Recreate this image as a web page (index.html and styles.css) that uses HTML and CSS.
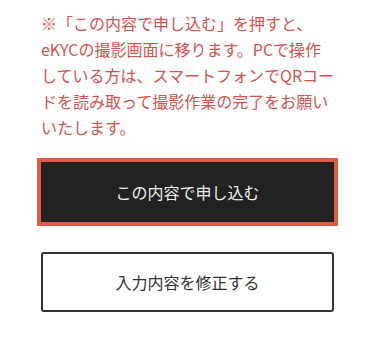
FILE: index.html
```html
<!DOCTYPE html>
<html lang="ja">
<head>
  <meta charset="UTF-8" />
  <meta name="viewport" content="width=device-width, initial-scale=1.0"/>
  <title>申し込み確認</title>
  <link rel="stylesheet" href="styles.css">
</head>
<body>
  <div class="container">
    <p class="notice">※「この内容で申し込む」を押すと、eKYCの撮影画面に移ります。PCで操作している方は、スマートフォンでQRコードを読み取って撮影作業の完了をお願いいたします。</p>

    <div class="actions">
      <button class="btn btn-submit">この内容で申し込む</button>
      <button class="btn btn-edit">入力内容を修正する</button>
    </div>
  </div>
</body>
</html>
```

FILE: styles.css
```css
body {
  margin: 0;
  background: #fff;
  font-family: "Noto Sans CJK JP", "Noto Sans", sans-serif;
}
.container {
  width: 293px;
  margin: 0 auto;
  padding-top: 10px;
}
.notice {
  margin: 0 -2px 0 0;
  font-size: 16px;
  line-height: 26px;
  color: #d4524e;
}
.actions {
  display: flex;
  flex-direction: column;
  gap: 30px;
  margin-top: 22px;
}
.btn {
  display: flex;
  justify-content: center;
  align-items: center;
  width: 100%;
  height: 60px;
  font-family: inherit;
  font-size: 16px;
  border-radius: 3px;
  cursor: pointer;
}
.btn-submit {
  background: #222;
  color: #eee;
  border: none;
  border-radius: 0;
  box-shadow: 0 0 0 4px #e05a45;
}
.btn-edit {
  background: #fff;
  color: #333;
  border: 2px solid #333;
}
```
